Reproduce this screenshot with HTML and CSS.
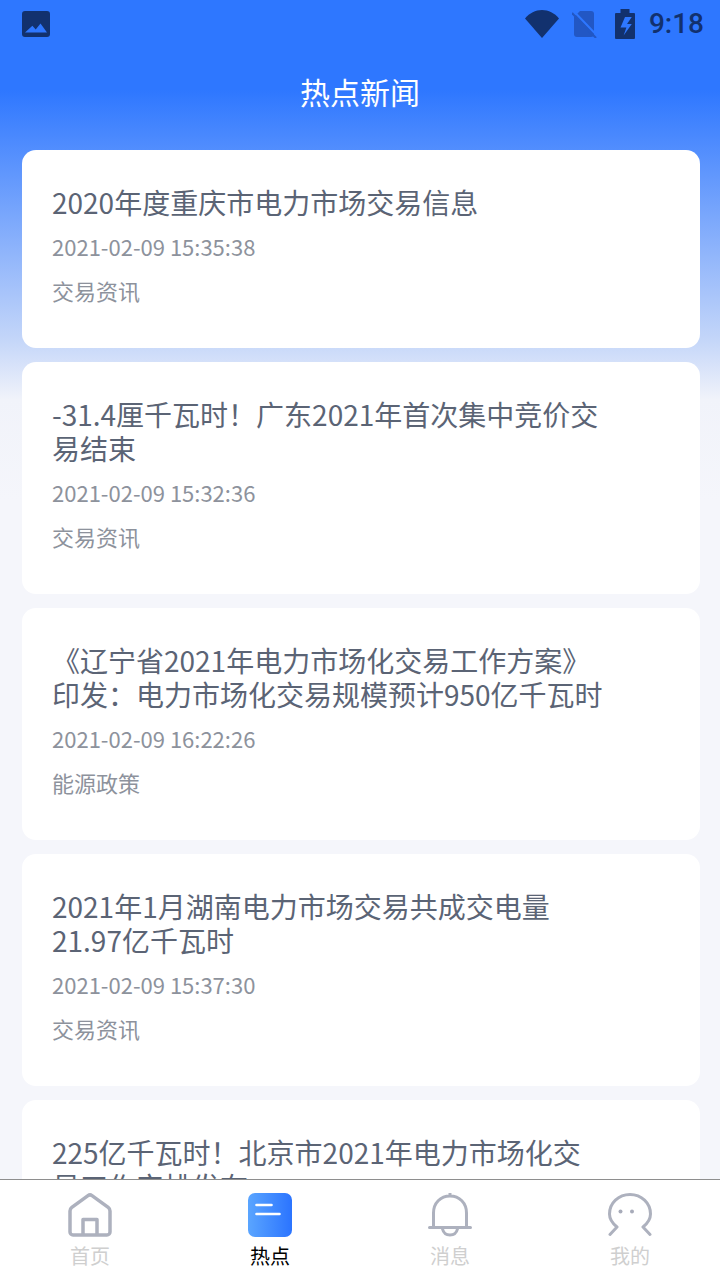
FILE: index.html
```html
<!DOCTYPE html>
<html lang="zh-CN">
<head>
<meta charset="utf-8">
<title>热点新闻</title>
<link rel="stylesheet" href="styles.css">
</head>
<body>
<div class="screen">
  <main class="main">
    <div class="status">
      <svg class="st-photo" width="28" height="26" viewBox="0 0 28 26"><path fill-rule="evenodd" d="M3 0h22a3 3 0 0 1 3 3v20a3 3 0 0 1-3 3H3a3 3 0 0 1-3-3V3a3 3 0 0 1 3-3zM3 21.500h22l-6.500-9-4.800 6-3.300-3.800z"/></svg>
      <div class="st-right">
        <svg class="st-wifi" width="36" height="28" viewBox="0 0 36 28"><path d="M1 8.500C5.500 3 11.500 0 18 0s12.500 3 17 8.500L18 28z"/></svg>
        <svg class="st-sim" width="28" height="28" viewBox="0 0 28 28"><path d="M8 1h11a3 3 0 0 1 3 3v20a3 3 0 0 1-3 3H5a3 3 0 0 1-3-3V7z"/><path class="st-gap" d="M1.500 1 25.500 26"/><path class="st-slash" d="M0 3 24 28"/></svg>
        <svg class="st-batt" width="20" height="30" viewBox="0 0 20 30"><path fill-rule="evenodd" d="M5.500 0h9v4H19a1 1 0 0 1 1 1v24a1 1 0 0 1-1 1H1a1 1 0 0 1-1-1V5a1 1 0 0 1 1-1h4.500zM10 8 5.500 18.500h5.900L8.600 26.500 16.800 15H12L16.800 8z"/></svg>
        <span class="st-time">9:18</span>
      </div>
    </div>
    <h1 class="title">热点新闻</h1>
    <div class="list">
      <article class="card">
        <h2 class="card-title">2020年度重庆市电力市场交易信息</h2>
        <div class="card-date">2021-02-09 15:35:38</div>
        <div class="card-tag">交易资讯</div>
      </article>
      <article class="card">
        <h2 class="card-title">-31.4厘千瓦时！广东2021年首次集中竞价交易结束</h2>
        <div class="card-date">2021-02-09 15:32:36</div>
        <div class="card-tag">交易资讯</div>
      </article>
      <article class="card">
        <h2 class="card-title">《辽宁省2021年电力市场化交易工作方案》印发：电力市场化交易规模预计950亿千瓦时</h2>
        <div class="card-date">2021-02-09 16:22:26</div>
        <div class="card-tag">能源政策</div>
      </article>
      <article class="card">
        <h2 class="card-title">2021年1月湖南电力市场交易共成交电量21.97亿千瓦时</h2>
        <div class="card-date">2021-02-09 15:37:30</div>
        <div class="card-tag">交易资讯</div>
      </article>
      <article class="card">
        <h2 class="card-title">225亿千瓦时！北京市2021年电力市场化交易工作安排发布</h2>
      </article>
    </div>
  </main>
  <nav class="tabbar">
    <div class="tab">
      <svg class="tab-icon" width="44" height="44" viewBox="0 0 44 44" fill="none"><path class="ic" d="M5 42a3 3 0 0 1-3-3V18c0-1.500.6-2.700 1.800-3.600L20 2.600a3.500 3.500 0 0 1 4 0l16.200 11.800c1.200.9 1.800 2.100 1.800 3.600v21a3 3 0 0 1-3 3zM15 42V26.500h14V42"/></svg>
      <span class="tab-label">首页</span>
    </div>
    <div class="tab tab-on">
      <svg class="tab-icon" width="44" height="44" viewBox="0 0 44 44"><defs><linearGradient id="newsFill" x1="0" x2="1" y1="0" y2="0"><stop offset="0" stop-color="#5aa5ff"/><stop offset="1" stop-color="#2b74ff"/></linearGradient></defs><rect width="44" height="44" rx="7" fill="url(#newsFill)"/><path d="M8.500 12h15M8.500 21h23" stroke="#fff" stroke-width="2.600" stroke-linecap="round"/></svg>
      <span class="tab-label">热点</span>
    </div>
    <div class="tab">
      <svg class="tab-icon" width="44" height="44" viewBox="0 0 44 44" fill="none"><path class="ic ic-thin" d="M5.500 34V20C5.500 10 12.500 3 22 3s16.500 7 16.500 17v14M1.500 34.500h41M22 2.500V.5M14.500 36c1 4 4 6 7.500 6s6.500-2 7.500-6"/></svg>
      <span class="tab-label">消息</span>
    </div>
    <div class="tab">
      <svg class="tab-icon" width="44" height="44" viewBox="0 0 44 44" fill="none"><path class="ic ic-thin" d="M9 34C4 30 1.500 26 1.500 21 1.500 10 10.500 1.500 22 1.500S42.500 10 42.500 21c0 5-2.500 9-7.500 13M9 34 2 41.500M35 34 42 41.500"/><circle class="ic-dot" cx="12.500" cy="18.500" r="2"/><circle class="ic-dot" cx="24" cy="18.500" r="2"/></svg>
      <span class="tab-label">我的</span>
    </div>
  </nav>
</div>
</body>
</html>
```
FILE: styles.css
```css
* { box-sizing: border-box; }

html, body {
  margin: 0;
  padding: 0;
}

body {
  font-family: "Noto Sans CJK SC", "Noto Sans", sans-serif;
}

.screen {
  width: 720px;
  height: 1280px;
  display: flex;
  flex-direction: column;
  overflow: hidden;
  background: #f5f6fb;
}

.main {
  flex: 1;
  min-height: 0;
  overflow: hidden;
  background: linear-gradient(180deg, #2e77ff 0, #2e77ff 90px, #c4d6f9 340px, #f1f3fa 400px, #f5f6fb 500px);
}

/* system status row */
.status {
  height: 50px;
  padding: 0 16px 2px 22px;
  display: flex;
  align-items: center;
  justify-content: space-between;
}

.status svg { fill: #12316e; display: block; }

.st-right {
  display: flex;
  align-items: center;
}

.st-wifi { margin-right: 12px; }
.status .st-sim { fill: #2257c4; margin-right: 15px; }
.st-gap { stroke: #2e77ff; stroke-width: 2; }
.st-slash { stroke: #2257c4; stroke-width: 2; }
.st-batt { margin-right: 14px; }

.st-time {
  font-family: Roboto, sans-serif;
  font-weight: 500;
  font-size: 28px;
  line-height: 48px;
  color: #12316e;
}

.title {
  margin: 0;
  height: 86px;
  padding-top: 18px;
  text-align: center;
  font-size: 30px;
  line-height: 46px;
  font-weight: 400;
  color: #fff;
}

.list {
  margin-top: 14px;
  padding: 0 20px 0 22px;
  display: flex;
  flex-direction: column;
  gap: 14px;
}

.card {
  flex: none;
  background: #fff;
  border-radius: 14px;
  padding: 35px 30px 40px;
}

.card-title {
  margin: 0;
  max-width: 552px;
  font-size: 28px;
  line-height: 34.500px;
  font-weight: 400;
  color: #5b6475;
}

.card-date {
  margin-top: 9px;
  font-size: 22px;
  line-height: 35px;
  color: #8d929c;
}

.card-tag {
  margin-top: 9px;
  font-size: 22px;
  line-height: 35px;
  color: #8d929c;
}

.tabbar {
  flex: none;
  height: 101px;
  border-top: 1px solid #8e8e8e;
  background: #fff;
  display: flex;
}

.tab {
  flex: 1;
  display: flex;
  flex-direction: column;
  align-items: center;
  padding-top: 13px;
}

.tab-icon { display: block; }

.ic {
  stroke: #adb1be;
  stroke-width: 3.500;
  stroke-linecap: round;
  stroke-linejoin: round;
}

.ic-thin { stroke-width: 3; }

.ic-dot { fill: #a7abb9; }

.tab-label {
  margin-top: 4px;
  font-size: 20px;
  line-height: 30px;
  color: #cfcfcf;
}

.tab-on .tab-label { color: #000; }
```
